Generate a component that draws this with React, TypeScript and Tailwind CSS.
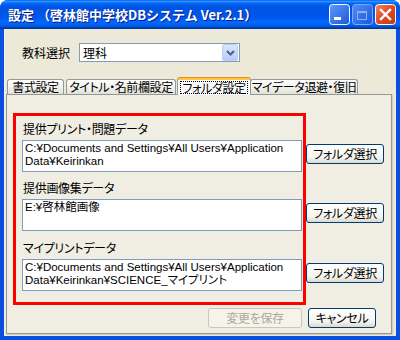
import React from "react";

const jp = "font-['Noto_Sans_CJK_JP','Noto_Sans',sans-serif] [font-feature-settings:'palt']";

function XpButton({
  children,
  disabled,
  className = "",
}: {
  children: React.ReactNode;
  disabled?: boolean;
  className?: string;
}) {
  return (
    <div
      className={`flex h-[20px] shrink-0 items-center justify-center whitespace-nowrap rounded-[3px] border text-[12px] leading-none tracking-[-0.3px] ${
        disabled
          ? "border-[#c9c7ba] bg-[#f5f4ea] text-[#aca899]"
          : "border-[#003c74] bg-[linear-gradient(to_bottom,#ffffff,#f4f4f0_70%,#dcd8cc)] text-black"
      } ${className}`}
    >
      {children}
    </div>
  );
}

function CaptionButtons() {
  return (
    <div className="flex gap-[2px]">
      <svg width="21" height="21" viewBox="0 0 21 21">
        <defs>
          <linearGradient id="bl" x1="0" y1="0" x2="1" y2="1">
            <stop offset="0" stopColor="#5e9bff" />
            <stop offset="1" stopColor="#1d56d8" />
          </linearGradient>
        </defs>
        <rect x="0.5" y="0.5" width="20" height="20" rx="3" fill="url(#bl)" stroke="#ffffff" />
        <rect x="5" y="13" width="7" height="3" fill="#ffffff" />
      </svg>
      <svg width="21" height="21" viewBox="0 0 21 21">
        <rect x="0.5" y="0.5" width="20" height="20" rx="3" fill="url(#bl)" stroke="#9ab8f2" opacity="0.85" />
        <rect x="5.5" y="7.5" width="9" height="8" fill="none" stroke="#8fb0f0" />
        <rect x="5" y="7" width="10" height="2" fill="#8fb0f0" />
      </svg>
      <svg width="21" height="21" viewBox="0 0 21 21">
        <defs>
          <linearGradient id="rd" x1="0" y1="0" x2="1" y2="1">
            <stop offset="0" stopColor="#f08a67" />
            <stop offset="0.5" stopColor="#de4a22" />
            <stop offset="1" stopColor="#c23a12" />
          </linearGradient>
        </defs>
        <rect x="0.5" y="0.5" width="20" height="20" rx="3" fill="url(#rd)" stroke="#ffffff" />
        <path d="M6 6 L15 15 M15 6 L6 15" stroke="#ffffff" strokeWidth="2.4" strokeLinecap="square" />
      </svg>
    </div>
  );
}

function PathBox({ lines }: { lines: string[] }) {
  return (
    <div className="h-[32px] w-[280px] shrink-0 overflow-hidden border border-[#7f9db9] bg-white px-[2px] pt-[1px] font-['Liberation_Sans','Noto_Sans_CJK_JP',sans-serif] text-[11.5px] leading-[13px] text-black">
      {lines.map((l, i) => (
        <div key={i} className="whitespace-nowrap">
          {l}
        </div>
      ))}
    </div>
  );
}

const folders = [
  {
    label: "提供プリント・問題データ",
    lines: ["C:¥Documents and Settings¥All Users¥Application", "Data¥Keirinkan"],
    mt: "mt-[27px]",
  },
  { label: "提供画像集データ", lines: ["E:¥啓林館画像"], mt: "mt-[9px]" },
  {
    label: "マイプリントデータ",
    lines: ["C:¥Documents and Settings¥All Users¥Application", "Data¥Keirinkan¥SCIENCE_マイプリント"],
    mt: "mt-[10px]",
  },
];

const tabs = ["書式設定", "タイトル・名前欄設定", "フォルダ設定", "マイデータ退避・復旧"];
const tabWidths = ["w-[57px]", "w-[110px]", "w-[74px]", "w-[108px]"];

export default function App() {
  return (
    <div className={`flex h-[340px] w-[400px] flex-col overflow-hidden rounded-t-[8px] bg-[#0a4fe0] ${jp}`}>
      <div className="flex h-[29px] shrink-0 items-center justify-between bg-[linear-gradient(to_bottom,#0058ee_0%,#3593ff_4%,#288eff_6%,#127dff_8%,#036ffc_10%,#0262ee_14%,#0057e5_20%,#0054e3_24%,#0055eb_56%,#005bf5_66%,#026afe_76%,#0062ef_86%,#0052d6_92%,#0040ab_96%,#003092_100%)] pl-[8px] pr-[4px]">
        <span className="text-[13px] font-bold text-white [font-feature-settings:normal] [text-shadow:1px_1px_#0a1883]">
          設定 （啓林館中学校DBシステム Ver.2.1）
        </span>
        <CaptionButtons />
      </div>

      <div className="mx-[4px] mb-[4px] flex flex-1 flex-col border-l border-[#f4f2e8] bg-[#ece9d8]">
        <div className="mt-[14px] flex items-center pl-[17px] text-[12px] text-black">
          <span className="w-[48px]">教科選択</span>
          <div className="ml-[9px] flex h-[19px] w-[161px] items-center border border-[#7f9db9] bg-white pl-[3px]">
            <span className="flex-1 leading-none">理科</span>
            <div className="mr-[1px] flex h-[17px] w-[16px] items-center justify-center rounded-[2px] border border-[#bcd0f6] bg-[linear-gradient(to_bottom,#dbe6fd,#b6cbf8)]">
              <svg width="9" height="6" viewBox="0 0 9 6">
                <path d="M1 1 L4.5 4.5 L8 1" fill="none" stroke="#4d6185" strokeWidth="2" />
              </svg>
            </div>
          </div>
        </div>

        <div className="relative z-10 mt-[15px] -mb-px flex h-[18px] items-end pl-[2px] text-[12px] tracking-[-0.4px] text-black">
          {tabs.map((t, i) =>
            i === 2 ? (
              <div
                key={t}
                className={`${tabWidths[i]} mx-[-1px] flex h-[18px] flex-col rounded-t-[3px] border-x border-[#919b9c] bg-[#fcfcfe]`}
              >
                <div className="h-[3px] rounded-t-[2px] border-t border-[#e68b2c] bg-[#ffc83c]" />
                <div className="mx-[2px] mt-[1px] flex h-[13px] items-center justify-center whitespace-nowrap border border-dotted border-black leading-none">
                  {t}
                </div>
              </div>
            ) : (
              <div
                key={t}
                className={`${tabWidths[i]} mb-px mr-[2px] flex h-[15px] items-center justify-center whitespace-nowrap rounded-t-[3px] border-x border-t border-[#919b9c] bg-[linear-gradient(to_bottom,#ffffff,#f0efea_60%,#e3e1d6)] leading-none`}
              >
                {t}
              </div>
            ),
          )}
        </div>

        <div className="relative ml-[1px] mr-[4px] flex h-[240px] flex-col border border-[#919b9c] bg-[#f0eee2] shadow-[1px_1px_0_#d0cdc0]">
          {folders.map((f) => (
            <div key={f.label} className={`${f.mt} flex flex-col`}>
              <div className="ml-[16px] h-[14px] text-[12px] leading-[14px] tracking-[-0.3px] text-black">{f.label}</div>
              <div className="ml-[15px] mt-[4px] flex items-start gap-[4px]">
                <PathBox lines={f.lines} />
                <XpButton className="mt-[4px] w-[78px]">フォルダ選択</XpButton>
              </div>
            </div>
          ))}

          <div className="mt-[17px] flex justify-end gap-[6px] pr-[15px]">
            <XpButton disabled className="w-[94px]">
              変更を保存
            </XpButton>
            <XpButton className="w-[68px]">キャンセル</XpButton>
          </div>

          <div className="pointer-events-none absolute left-[6px] top-[18px] h-[192px] w-[293px] border-[3px] border-[#ff0000]" />
        </div>
      </div>
    </div>
  );
}
